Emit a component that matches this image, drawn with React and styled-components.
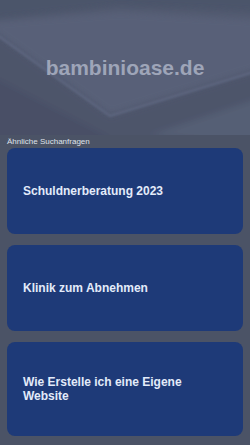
import React from "react";
import styled, { createGlobalStyle } from "styled-components";

const Global = createGlobalStyle`
  html, body { margin: 0; padding: 0; background: #4b5366; }
  body { font-family: "Liberation Sans", Arial, sans-serif; }
`;

const Page = styled.div`
  width: 250px;
  min-height: 445px;
  background: #4b5366;
  display: flex;
  flex-direction: column;
`;

const Header = styled.header`
  position: relative;
  height: 135px;
  display: flex;
  align-items: center;
  justify-content: center;
  overflow: hidden;
  background: #4f576d;
`;

const HeaderArt = styled.svg`
  position: absolute;
  inset: 0;
  width: 100%;
  height: 100%;
`;

const Title = styled.h1`
  position: relative;
  margin: 1px 0 0;
  font-size: 21px;
  font-weight: 700;
  color: #9ea5b8;
  line-height: 24px;
`;

const Label = styled.div`
  font-size: 8px;
  line-height: 13px;
  color: #dfe2ea;
  padding: 0 7px;
`;

const List = styled.div`
  display: flex;
  flex-direction: column;
  gap: 11px;
  padding: 0 7px 9px;
`;

const Card = styled.a`
  display: flex;
  align-items: center;
  min-height: 86px;
  box-sizing: border-box;
  padding: 33px 16px;
  background: #1e3a78;
  border-radius: 8px;
  color: #e3ebfa;
  font-size: 12px;
  font-weight: 700;
  line-height: 14px;
  text-decoration: none;
`;

const items = [
  "Schuldnerberatung 2023",
  "Klinik zum Abnehmen",
  "Wie Erstelle ich eine Eigene Website",
];

export default function App() {
  return (
    <>
      <Global />
      <Page>
        <Header>
          <HeaderArt viewBox="0 0 250 135" preserveAspectRatio="none">
            <defs>
              <filter id="b" x="-10%" y="-10%" width="120%" height="120%">
                <feGaussianBlur stdDeviation="3" />
              </filter>
              <filter id="s" x="-10%" y="-10%" width="120%" height="120%">
                <feGaussianBlur stdDeviation="1.2" />
              </filter>
            </defs>
            <rect width="250" height="135" fill="#525a70" />
            <g filter="url(#b)">
              <polygon points="-10,-10 260,-10 260,12 120,6 -10,20" fill="#4c546a" />
              <polygon points="-10,28 110,114 260,68 260,20 120,12 -10,22" fill="#586178" />
              <polygon points="-10,30 110,116 260,70 260,145 -10,145" fill="#4d556b" />
              <polygon points="-10,75 115,140 -10,145" fill="#485066" />
              <polygon points="260,98 150,135 260,145" fill="#555e75" />
            </g>
            <g filter="url(#s)" opacity="0.55">
              <polyline points="-10,30 110,116 260,70" fill="none" stroke="#6a7390" strokeWidth="2" />
            </g>
          </HeaderArt>
          <Title>bambinioase.de</Title>
        </Header>
        <Label>Ähnliche Suchanfragen</Label>
        <List>
          {items.map((t) => (
            <Card key={t} href="#">
              {t}
            </Card>
          ))}
        </List>
      </Page>
    </>
  );
}
